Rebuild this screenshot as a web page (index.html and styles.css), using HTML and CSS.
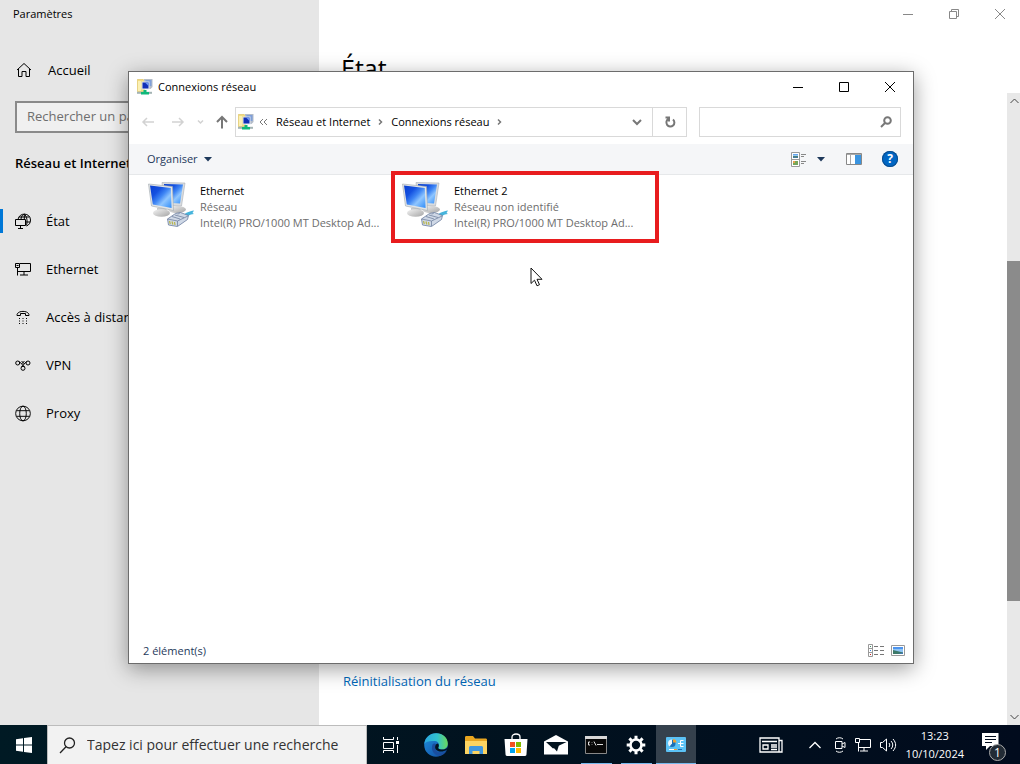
FILE: index.html
```html
<!DOCTYPE html>
<html lang="fr">
<head>
<meta charset="utf-8">
<meta name="viewport" content="width=device-width, initial-scale=1">
<title>Connexions réseau</title>
<link rel="stylesheet" href="styles.css">
</head>
<body>
<svg class="symbols" aria-hidden="true">
  <defs>
    <linearGradient id="screen" x1="0" y1="0" x2="1" y2="1">
      <stop offset="0" stop-color="#0a3fd0"/><stop offset=".3" stop-color="#1450e0"/><stop offset=".5" stop-color="#3f86f4"/><stop offset=".68" stop-color="#8fc6ff"/><stop offset="1" stop-color="#2f8cf8"/>
    </linearGradient>
    <linearGradient id="stand" x1="0" y1="0" x2="1" y2="1">
      <stop offset="0" stop-color="#f4f4f4"/><stop offset="1" stop-color="#a4a4a4"/>
    </linearGradient>
    <linearGradient id="edge-top" x1="0" y1="0" x2="1" y2="0">
      <stop offset="0" stop-color="#2aa7e0"/><stop offset=".55" stop-color="#31c2cf"/><stop offset="1" stop-color="#6bd95a"/>
    </linearGradient>
    <linearGradient id="edge-low" x1="0" y1="0" x2="1" y2="1">
      <stop offset="0" stop-color="#1f8fe0"/><stop offset="1" stop-color="#104a9c"/>
    </linearGradient>
    <linearGradient id="sky" x1="0" y1="0" x2="0" y2="1">
      <stop offset="0" stop-color="#4d94ee"/><stop offset=".5" stop-color="#b5dcf5"/><stop offset=".6" stop-color="#4b7f74"/><stop offset="1" stop-color="#3f78b0"/>
    </linearGradient>
  </defs>
  <symbol id="folder-net" viewBox="0 0 16 16">
    <path d="M.3.500h6l1 1v11h-7z" fill="#f3dd80" stroke="#d9bd5c" stroke-width=".6"/>
    <path d="M1 2h3v10H1z" fill="#fbf0b4"/>
    <path d="M7 0h8.500v8l-2 2H7z" fill="#b4bcc8"/>
    <path d="M8.500 1h6v6h-6z" fill="#7f9fd8"/>
    <path d="M4.500 2.500h8v8h-8z" fill="#dfe5ee"/><path d="M5.500 3.500h6v6h-6z" fill="#1230b8"/><path d="M8 3.500h3.500V7z" fill="#6d98f4"/>
    <path d="M0 13.800h15" stroke="#a3b3b3" stroke-width="2"/>
    <path d="M6.500 11h3v2h2.500v2.500H4V13h2.500z" fill="#10b87a"/>
  </symbol>
  <symbol id="computers" viewBox="0 0 48 48">
    <ellipse cx="30" cy="28.500" rx="9" ry="3.500" fill="url(#stand)"/>
    <path d="M15 1.500l23 .5-3.500 23-17.500-1z" fill="#d9dcdf" stroke="#a9afb5" stroke-width=".6"/>
    <path d="M17 3l19 .5-3 19-15-1z" fill="url(#screen)"/>
    <path d="M10 27h9l2 5H10z" fill="#c6c8ca"/>
    <ellipse cx="14.500" cy="32" rx="8.500" ry="3.800" fill="url(#stand)"/>
    <path d="M1.500 3l24 2.500 1 24L4.500 25z" fill="#e1e4e6" stroke="#9fa7ad" stroke-width=".6"/>
    <path d="M3 4.500L23.800 7l.8 20L5.800 23.500z" fill="url(#screen)"/>
    <path d="M36 35c3-4 6-4.500 11-5.500l-1.500 2.500 1.500 1c-5 .5-6 2-8 5z" fill="#46b4dc"/>
    <path d="M20.500 38l8-5.500 5-1 8 3-1 4-10 7-9-1.500z" fill="#cfd8e6" stroke="#6b7da0" stroke-width=".8"/>
    <path d="M20.500 38l10 2 10.500-5M30.500 40v5M28 34l9 2.500M25 35.500l8 2.500M33 31.500l-2 2" fill="none" stroke="#72839f" stroke-width=".8"/>
    <path d="M22.500 40l.8 3M25 40.500l.8 3M27.500 41l.5 3" stroke="#b9b64c" stroke-width="1.200"/>
  </symbol>
</svg>

<div class="desktop">
  <div class="settings">
    <aside class="sidebar">
      <h1 class="app-title">Paramètres</h1>
      <a class="home" href="#">
        <svg width="16" height="16" viewBox="0 0 16 16" class="line"><path d="M1 8L8 1.500 15 8M2.500 7v7.500h3.500v-5h4v5h3.500V7"/></svg>
        Accueil
      </a>
      <input class="find" type="text" placeholder="Rechercher un paramètre" aria-label="Rechercher un paramètre">
      <h2 class="section">Réseau et Internet</h2>
      <nav class="menu">
        <a class="item current" href="#">
          <svg width="16" height="17" viewBox="0 0 16 17" class="line"><path d="M3 6.500C4-1 15.500-.5 15.500 7c0 3-1.500 5-4 6M4 4h10.500M11 9h4M6 6C6.300 3 8 1.500 9.300 1.200c2.700 1.800 3.500 8 2 11.300M9.300 1.200V6M.5 6.500h10v6H.5zM5.500 12.500v3M3 15.500h5"/></svg>
          État
        </a>
        <a class="item" href="#">
          <svg width="16" height="13" viewBox="0 0 16 13" class="line"><path d="M5 .5h10.500v8H2.500V5M.5.5h4v4h-4zM1.500 2.500h2M2.500 8v4.500M9 8.500v3.500M5 12h8"/></svg>
          Ethernet
        </a>
        <a class="item" href="#">
          <svg width="16" height="14" viewBox="0 0 16 14" class="line"><path d="M2 5.500C1.500 0 14.500 0 14 5.500h-3.500V3.500H5.500v2z"/><path d="M4 8.500h1m2.500 0h1m2.500 0h1M4 11h1m2.500 0h1m2.500 0h1M4 13.500h1m2.500 0h1m2.500 0h1"/></svg>
          Accès à distance
        </a>
        <a class="item" href="#">
          <svg width="16" height="11" viewBox="0 0 16 11" class="line"><circle cx="2.700" cy="3" r="2"/><circle cx="13" cy="3" r="2"/><circle cx="8" cy="8.300" r="2"/><path d="M4.300 1.500L9.500 7M11.500 1.500L6.500 7M6.500 1l3 3M9.500 1l-3 3"/></svg>
          VPN
        </a>
        <a class="item" href="#">
          <svg width="17" height="17" viewBox="0 0 17 17" class="line"><circle cx="8.500" cy="8.500" r="7.800"/><ellipse cx="8.500" cy="8.500" rx="3.500" ry="7.800"/><path d="M1.500 5.500h14M1.500 11.500h14"/></svg>
          Proxy
        </a>
      </nav>
    </aside>
    <main class="page">
      <div class="page-body">
        <h2 class="page-title">État</h2>
        <a class="reset" href="#">Réinitialisation du réseau</a>
      </div>
      <div class="page-side">
        <div class="captions muted">
          <button aria-label="Réduire"><svg width="12" height="12" class="line"><path d="M1 6.500h10"/></svg></button>
          <button aria-label="Restaurer"><svg width="12" height="12" class="line"><path d="M1.500 3.500h7v7h-7zM3.500 3V1.500h7v7H9"/></svg></button>
          <button aria-label="Fermer"><svg width="12" height="12" class="line"><path d="M1 1l10 10M11 1L1 11"/></svg></button>
        </div>
        <div class="scroll">
          <svg width="11" height="8" class="line"><path d="M1.500 6L5.500 2l4 4"/></svg>
          <div class="track"><div class="thumb"></div></div>
          <svg width="11" height="8" class="line"><path d="M1.500 2l4 4 4-4"/></svg>
        </div>
      </div>
    </main>
  </div>

  <section class="explorer" aria-label="Connexions réseau">
    <header class="titlebar">
      <svg width="16" height="16"><use href="#folder-net"/></svg>
      <h2 class="title">Connexions réseau</h2>
      <div class="captions">
        <button aria-label="Réduire"><svg width="12" height="12" class="line"><path d="M1 6.500h10"/></svg></button>
        <button aria-label="Agrandir"><svg width="12" height="12" class="line"><path d="M1.500 1.500h9v9h-9z"/></svg></button>
        <button aria-label="Fermer"><svg width="12" height="12" class="line"><path d="M1 1l10 10M11 1L1 11"/></svg></button>
      </div>
    </header>
    <div class="navrow">
      <div class="arrows">
        <button aria-label="Précédent" class="faint"><svg width="14" height="14" class="line bold"><path d="M13 7H2M6 3L2 7l4 4"/></svg></button>
        <button aria-label="Suivant" class="faint"><svg width="14" height="14" class="line bold"><path d="M1 7h11M8 3l4 4-4 4"/></svg></button>
        <button aria-label="Emplacements récents" class="faint small"><svg width="7" height="6" class="line bold"><path d="M1 1.500l2.500 2.500L6 1.500"/></svg></button>
        <button aria-label="Dossier parent" class="up"><svg width="12" height="14" class="line thick"><path d="M6 13.500V2M1 7l5-5 5 5"/></svg></button>
      </div>
      <div class="address">
        <svg width="16" height="16"><use href="#folder-net"/></svg>
        <svg width="9" height="8" class="line grey"><path d="M4 1L1 4l3 3M8 1L5 4l3 3"/></svg>
        <a class="crumb" href="#">Réseau et Internet</a>
        <svg width="5" height="8" class="line bold grey"><path d="M1 1.500L3.500 4 1 6.500"/></svg>
        <a class="crumb" href="#">Connexions réseau</a>
        <svg width="5" height="8" class="line bold grey"><path d="M1 1.500L3.500 4 1 6.500"/></svg>
        <button class="drop" aria-label="Historique"><svg width="10" height="8" class="line thick grey"><path d="M1 2l4 4 4-4"/></svg></button>
        <button class="refresh" aria-label="Actualiser"><svg width="12" height="12" class="line thick grey"><path d="M9 3.500A4 4 0 1 1 4.500 3M1.500 1.500H5V5.500"/></svg></button>
      </div>
      <label class="search">
        <input type="text" aria-label="Rechercher dans Connexions réseau">
        <svg width="12" height="12" class="line thick grey"><circle cx="7.500" cy="4.500" r="3.300"/><path d="M5 7L1 11"/></svg>
      </label>
    </div>
    <div class="toolbar">
      <button class="organise">Organiser <svg width="8" height="5"><path d="M0 0h8L4 4.500z" fill="#1e395b"/></svg></button>
      <div class="tools">
        <button aria-label="Affichage"><svg width="15" height="15" viewBox="0 0 15 15"><path d="M.5.5h8v14h-8zM.5 7.500h8" fill="#fff" stroke="#9a9a9a"/><path d="M2 2h5v4H2z" fill="url(#sky)"/><path d="M2 9h5v4H2z" fill="#76a65a"/><path d="M2 9h2v2H2z" fill="#e9a14c"/><path d="M10 2.500h5M10 4.500h3M10 9.500h5M10 11.500h3" stroke="#888"/></svg></button>
        <button aria-label="Autres options" class="more"><svg width="8" height="5"><path d="M0 0h8L4 4.500z" fill="#1e395b"/></svg></button>
        <button aria-label="Volet de visualisation" class="pane"><svg width="16" height="12"><path d="M.5.5h15v11H.5z" fill="#fff" stroke="#888"/><path d="M1 1h14v1H1z" fill="#aaa"/><path d="M4.500 2v9" stroke="#aaa"/><path d="M9 2h6v9H9z" fill="#3a94e0"/></svg></button>
        <button class="help" aria-label="Aide">?</button>
      </div>
    </div>
    <div class="content">
      <a class="connection" href="#">
        <svg width="48" height="48"><use href="#computers"/></svg>
        <span class="details"><span class="name">Ethernet</span><span>Réseau</span><span>Intel(R) PRO/1000 MT Desktop Ad...</span></span>
      </a>
      <a class="connection marked" href="#">
        <svg width="48" height="48"><use href="#computers"/></svg>
        <span class="details"><span class="name">Ethernet 2</span><span>Réseau non identifié</span><span>Intel(R) PRO/1000 MT Desktop Ad...</span></span>
      </a>
      <svg class="pointer" width="13" height="20" viewBox="0 0 13 20"><path d="M1 1v15.500l3.500-3.300 2.500 5.600 2.500-1.100L7 12.300h5z" fill="#fff" stroke="#111"/></svg>
    </div>
    <footer class="status">
      <span>2 élément(s)</span>
      <div class="views">
        <button aria-label="Détails"><svg width="16" height="13"><path d="M.5.500h4v12h-4zM.5 4.500h4M.5 8.500h4" fill="#fff" stroke="#999"/><path d="M2 2h1v1H2z" fill="#3c8c64"/><path d="M2 6h1v1H2z" fill="#3282e6"/><path d="M2 10h1v1H2z" fill="#c22"/><path d="M6 2.500h4m2 0h4M6 6.500h4m2 0h4M6 10.500h4m2 0h4" stroke="#777"/></svg></button>
        <button aria-label="Grandes icônes"><svg width="14" height="11"><path d="M.5.500h13v10H.5z" fill="#fff" stroke="#999"/><path d="M2 2h10v7H2z" fill="#8fc4f4"/><path d="M2 2h10v2H2z" fill="#4d94ee"/><path d="M2 5l4 1 6 1.500V9H2z" fill="#3d7a6a"/><path d="M7 9l5-1.500V9z" fill="#3f78b0"/></svg></button>
      </div>
    </footer>
  </section>
</div>

<footer class="taskbar">
  <button class="start" aria-label="Démarrer"><svg width="16" height="16"><path d="M0 2.200L7 1.200v6.300H0zM8 1.100L16 0v7.500H8zM0 8.500h7v6.300L0 13.800zM8 8.500h8V16l-8-1.100z" fill="#fff"/></svg></button>
  <label class="task-search">
    <svg width="17" height="17" class="line wide"><circle cx="10.500" cy="6" r="5"/><path d="M7 9.800L1 16"/></svg>
    <input type="text" placeholder="Tapez ici pour effectuer une recherche" aria-label="Rechercher">
  </label>
  <button class="taskview" aria-label="Vue des tâches"><svg width="17" height="16" class="line light"><path d="M.5 0v2.500h10V0M.5 5.500h10v6H.5zM.5 16v-2.500h10V16M14.500 0v3M14.500 8v8"/><path d="M13 4h3v3h-3z" fill="#fff" stroke="none"/></svg></button>
  <div class="apps">
    <button aria-label="Edge"><svg width="24" height="24" viewBox="0 0 24 24"><circle cx="12" cy="12" r="11.800" fill="url(#edge-low)"/><path d="M.3 11C1 4.500 6 .2 12.200.2 19 .2 23.800 5 23.800 10.500c0 4-3 6-6 6-2 0-4-.8-3.500-1.800 1.500-2 .8-6.200-3.300-6.700C6 7.500 1.500 8.500.3 11z" fill="url(#edge-top)"/><path d="M8.500 11.500C6.500 17 10 22.500 15.500 23c3-.5 5.500-2.500 7-5-5 3-10 1.500-11-2-.5-1.800.3-3 1-4-.5-1.500-3-2-4-.5z" fill="#1a4e9e"/><path d="M12.500 11c-2 2-2 5.500 1.500 7 3 1.200 6 .5 9-1.500.5-.7.8-1.500.8-2.500-1.500 2-4 2.800-6.500 2.500-2-.2-3.500-1-3-2 .7-1 .8-3-.3-4z" fill="#02131f"/></svg></button>
    <button aria-label="Explorateur de fichiers"><svg width="22" height="20" viewBox="0 0 22 20"><path d="M0 2.500C0 1.500.5 1 1.500 1H8l2 2.500h10.500c1 0 1.500.5 1.500 1.500v13H0z" fill="#e9a620"/><path d="M0 6h22v13H0z" fill="#fcd462"/><path d="M4 12.500C4 12 4.500 11 5.500 11h11c1 0 1.500 1 1.500 1.500V19h-3.500v-3h-7v3H4z" fill="#3f97e0"/></svg></button>
    <button aria-label="Microsoft Store"><svg width="24" height="23" viewBox="0 0 24 23"><path d="M8 7V4c0-4 8-4 8 0v3" fill="none" stroke="#fff" stroke-width="1.300"/><path d="M.5 6h23l-1 15c0 1-.5 2-1.500 2H3c-1 0-1.500-1-1.500-2z" fill="#fff"/><path d="M6 9h5v5H6z" fill="#f25022"/><path d="M12 9h5v5h-5z" fill="#7fba00"/><path d="M6 15h5v5H6z" fill="#00a4ef"/><path d="M12 15h5v5h-5z" fill="#ffb900"/></svg></button>
    <button aria-label="Courrier"><svg width="24" height="20" viewBox="0 0 24 20"><path d="M0 6.500L12 0l12 6.500V19.500H0z" fill="#fff"/><path d="M2 7h20.500L9 13.500z" fill="#02131f"/><path d="M9 12l4 4.500L15 10z" fill="#02131f"/></svg></button>
    <button aria-label="Invite de commandes" class="open"><svg width="22" height="18" viewBox="0 0 22 18"><path d="M.5.500h21v17H.5z" fill="#080808" stroke="#888"/><path d="M0 0h22v3H0z" fill="#d8d8d8"/><path d="M5 6H3.500v3H5M7 6.500v.5M7 8.500V9M9 5.500l2 4M12 8.500h6" fill="none" stroke="#ddd"/></svg></button>
    <button aria-label="Paramètres" class="open"><svg width="20" height="20" viewBox="-10 -10 20 20"><circle r="5.500" fill="none" stroke="#fff" stroke-width="2.600"/><path d="M0-6v-3.300M0 6v3.300M-6 0h-3.300M6 0h3.300M4.300 4.300l2.300 2.300M-4.300-4.300l-2.300-2.300M4.300-4.300l2.300-2.300M-4.300 4.300l-2.300 2.300" stroke="#fff" stroke-width="3"/></svg></button>
    <button aria-label="Panneau de configuration" class="open active"><svg width="20" height="15" viewBox="0 0 20 15"><rect width="20" height="15" rx="1" fill="#5cc2f5"/><circle cx="6" cy="6.500" r="3.500" fill="#1a6fb8"/><path d="M6 6.500V2.500a4 4 0 0 0-4 4 4 4 0 0 0 1.500 3z" fill="#eaf7ff"/><path d="M7 5.500V2a4 4 0 0 1 3.500 3.500z" fill="#f0a030"/><path d="M17.500 3.500h-3v6h3M12 6.500h5.500" fill="none" stroke="#fff"/><path d="M3 12.500h5" stroke="#fff"/><path d="M8 12.500h3" stroke="#f0a030"/><path d="M12 12.500h4" stroke="#1a6fb8"/></svg></button>
  </div>
  <div class="tray">
    <button class="news" aria-label="Actualités"><svg width="24" height="16" class="line wide light"><path d="M1 1h19v14H1zM20 3.500h3V15h-3M3 4.500h15M12 8h6M12 10h6M12 12.500h6"/><path d="M4 8h5v4H4z"/></svg></button>
    <button aria-label="Icônes cachées"><svg width="12" height="8" class="line wide light"><path d="M.5 7L6 1.500 11.500 7"/></svg></button>
    <button aria-label="Caméra"><svg width="12" height="16" class="line light"><path d="M1.500 4.500h6.500v7H1.500zM8 7l3-1.500v5L8 9M2 2C4 .3 7 .3 9 2M2 14c2 1.700 5 1.700 7 0"/></svg></button>
    <button aria-label="Réseau"><svg width="16" height="14" class="line light"><path d="M5 1.500h10.500v8H3.500V5M.5.5h4v4h-4zM3.500 9v4.500M9 9.500V13M5 13h8"/></svg></button>
    <button aria-label="Volume"><svg width="17" height="14" class="line light"><path d="M.5 4.500h2L6.500 1v12l-4-3.500h-2zM9 5c1 1.500 1 2.500 0 4M11 3c2.300 2.500 2.300 5.500 0 8M13 1c3.500 4 3.500 8 0 12"/></svg></button>
    <button class="clock"><time>13:23</time><time>10/10/2024</time></button>
    <button class="notes" aria-label="Notifications"><svg width="17" height="17"><path d="M0 0h16.500v13H8l-4 4v-4H0z" fill="#fff"/><path d="M3 3.500h11M3 6.500h11M3 9.500h7" stroke="#010c1e"/></svg><span class="badge">1</span></button>
  </div>
</footer>
</body>
</html>
```
FILE: styles.css
```css
* { box-sizing: border-box; }

body {
  margin: 0;
  min-height: 100vh;
  display: grid;
  grid-template-rows: 1fr 39px;
  font-family: "Open Sans", "Noto Sans", sans-serif;
  font-size: 11px;
  line-height: 16px;
  color: #000;
  background: #fff;
}

h1, h2 { margin: 0; font-weight: 400; }
a { color: inherit; text-decoration: none; }
button { margin: 0; padding: 0; border: 0; background: none; font: inherit; color: inherit; display: grid; place-items: center; }
input { font: inherit; color: inherit; border: 0; margin: 0; padding: 0; outline: 0; background: none; min-width: 0; }
svg { display: block; flex: none; }

.symbols { position: absolute; width: 0; height: 0; }
.line { fill: none; stroke: currentColor; stroke-width: 1; }
.line.wide { stroke-width: 1.3; }
.line.bold { stroke-width: 1.5; }
.line.thick { stroke-width: 2; }
.grey { color: #777; }
.light { color: #fff; }

.desktop { position: relative; display: grid; min-height: 0; overflow: hidden; }

/* Settings */
.settings { display: grid; grid-template-columns: 319px 1fr; }
.sidebar { background: #e6e6e6; padding: 6px 15px; font-size: 13px; }
.app-title { font-size: 11px; margin-left: -2px; }
.home { display: flex; align-items: center; gap: 16px; height: 48px; margin-top: 24px; padding-left: 1px; }
.find { display: block; width: 100%; height: 32px; margin-top: 7px; padding: 0 10px 2px; border: 2px solid #8a8a8a; background: #f0f0f0; }
.find::placeholder { color: #6e6e6e; opacity: 1; }
.section { font-size: 13px; font-weight: 600; line-height: 20px; margin-top: 20px; }
.menu { margin: 24px -15px 0; }
.item { display: flex; align-items: center; gap: 15px; height: 48px; padding-left: 15px; }
.item svg { width: 16px; }
.current { background: linear-gradient(#0078d7, #0078d7) 0 50% / 3px 24px no-repeat; }

.page { display: grid; grid-template-columns: 1fr auto; }
.page-body { display: flex; flex-direction: column; justify-content: space-between; padding: 50px 24px 34px; }
.page-title { font-size: 25px; line-height: 36px; margin-left: -2px; }
.reset { color: #0067b8; font-size: 13px; line-height: 20px; }
.page-side { display: flex; flex-direction: column; align-items: flex-end; }
.captions { display: flex; }
.captions button { width: 46px; height: 28px; }
.muted { color: #888; margin-right: -3px; height: 93px; overflow: hidden; }
.scroll { flex: 1; width: 13px; display: flex; flex-direction: column; align-items: center; justify-content: space-between; padding: 4px 0 4px 2px; background: #e8e8e8; color: #444; }
.track { flex: 1; align-self: stretch; margin-left: -2px; display: grid; grid-template-rows: 155fr 339fr 112fr; }
.thumb { grid-row: 2; background: #8b8b8b; }

/* Explorer window */
.explorer { position: absolute; inset: 71px 106px 61px 128px; display: flex; flex-direction: column; background: #fff; border: 1px solid #6c6c6c; box-shadow: 0 5px 20px rgba(0, 0, 0, .38); }
.titlebar { display: flex; align-items: center; gap: 5px; height: 29px; padding-left: 8px; }
.title { flex: 1; font-size: 11px; }
.navrow { display: flex; align-items: center; gap: 12px; height: 43px; padding: 0 12px 1px; }
.arrows { display: flex; align-items: center; gap: 16px; margin-right: -5px; }
.arrows .small { margin: 0 -4px; }
.arrows .up { color: #777; }
.faint { color: #d2d2d2; }
.address { flex: 1; display: flex; align-items: center; gap: 8px; height: 30px; border: 1px solid #d9d9d9; padding-left: 2px; }
.address > svg:first-child { margin-right: -3px; }
.drop { width: 30px; height: 28px; margin-left: auto; }
.refresh { width: 34px; height: 28px; border-left: 1px solid #d9d9d9; margin-left: -8px; }
.search { display: flex; align-items: center; width: 202px; height: 30px; padding: 0 8px; border: 1px solid #d9d9d9; }
.search input { flex: 1; }
.toolbar { display: flex; align-items: center; justify-content: space-between; height: 31px; padding: 0 15px 0 18px; background: #f5f6f8; border-bottom: 1px solid #e6e8ea; color: #1e395b; }
.organise { display: flex; align-items: center; gap: 6px; }
.tools { display: flex; align-items: center; }
.more { margin: 0 21px 0 11px; }
.help { width: 16px; height: 16px; margin-left: 20px; border-radius: 50%; background: #0066c4; box-shadow: inset 0 0 0 1px #0a4c8c; color: #fff; font-size: 12px; font-weight: 700; }
.content { position: relative; flex: 1; display: flex; align-items: flex-start; padding: 6px 16px; }
.connection { position: relative; display: flex; gap: 5px; width: 254px; padding-left: 2px; color: #6d6d6d; white-space: nowrap; }
.details { display: flex; flex-direction: column; padding-top: 2px; }
.name { color: #000; }
.marked::after { content: ""; position: absolute; inset: -10px -6px -12px -8px; border: 4px solid #e81c1e; }
.pointer { position: absolute; left: 401px; top: 92px; }
.status { display: flex; align-items: center; justify-content: space-between; height: 25px; padding: 0 8px 0 14px; color: #1e395b; }
.views { display: flex; align-items: center; gap: 7px; }

/* Taskbar */
.taskbar { display: flex; background: linear-gradient(90deg, #001a24, #01121f 50%, #010b1d); color: #fff; }
.start { width: 47px; }
.task-search { display: flex; align-items: center; gap: 11px; width: 320px; padding-left: 11px; background: #f2f2f2; border: 1px solid #bcbcbc; border-width: 1px 1px 0; color: #222; font-size: 14px; }
.task-search input { flex: 1; }
.task-search input::placeholder { color: #333; opacity: 1; }
.taskview { width: 49px; }
.apps { display: flex; }
.apps button { width: 40px; }
.apps .open { background: linear-gradient(#76b9ed, #76b9ed) 50% 100% / 31px 1px no-repeat; }
.apps .active { background-size: 40px 1px; background-color: #35414d; }
.tray { display: flex; align-items: center; gap: 9px; margin-left: auto; padding-right: 14px; }
.news { margin-right: 17px; }
.news + button { margin-right: 4px; }
.clock { gap: 2px; font-size: 11px; line-height: 16px; text-align: center; }
.notes { position: relative; width: 24px; height: 24px; margin-left: 9px; place-items: start; }
.badge { position: absolute; right: 0; bottom: -4px; width: 17px; height: 17px; border: 1px solid #aaa; border-radius: 50%; background: #222b35; font-size: 12px; line-height: 15px; }
```
